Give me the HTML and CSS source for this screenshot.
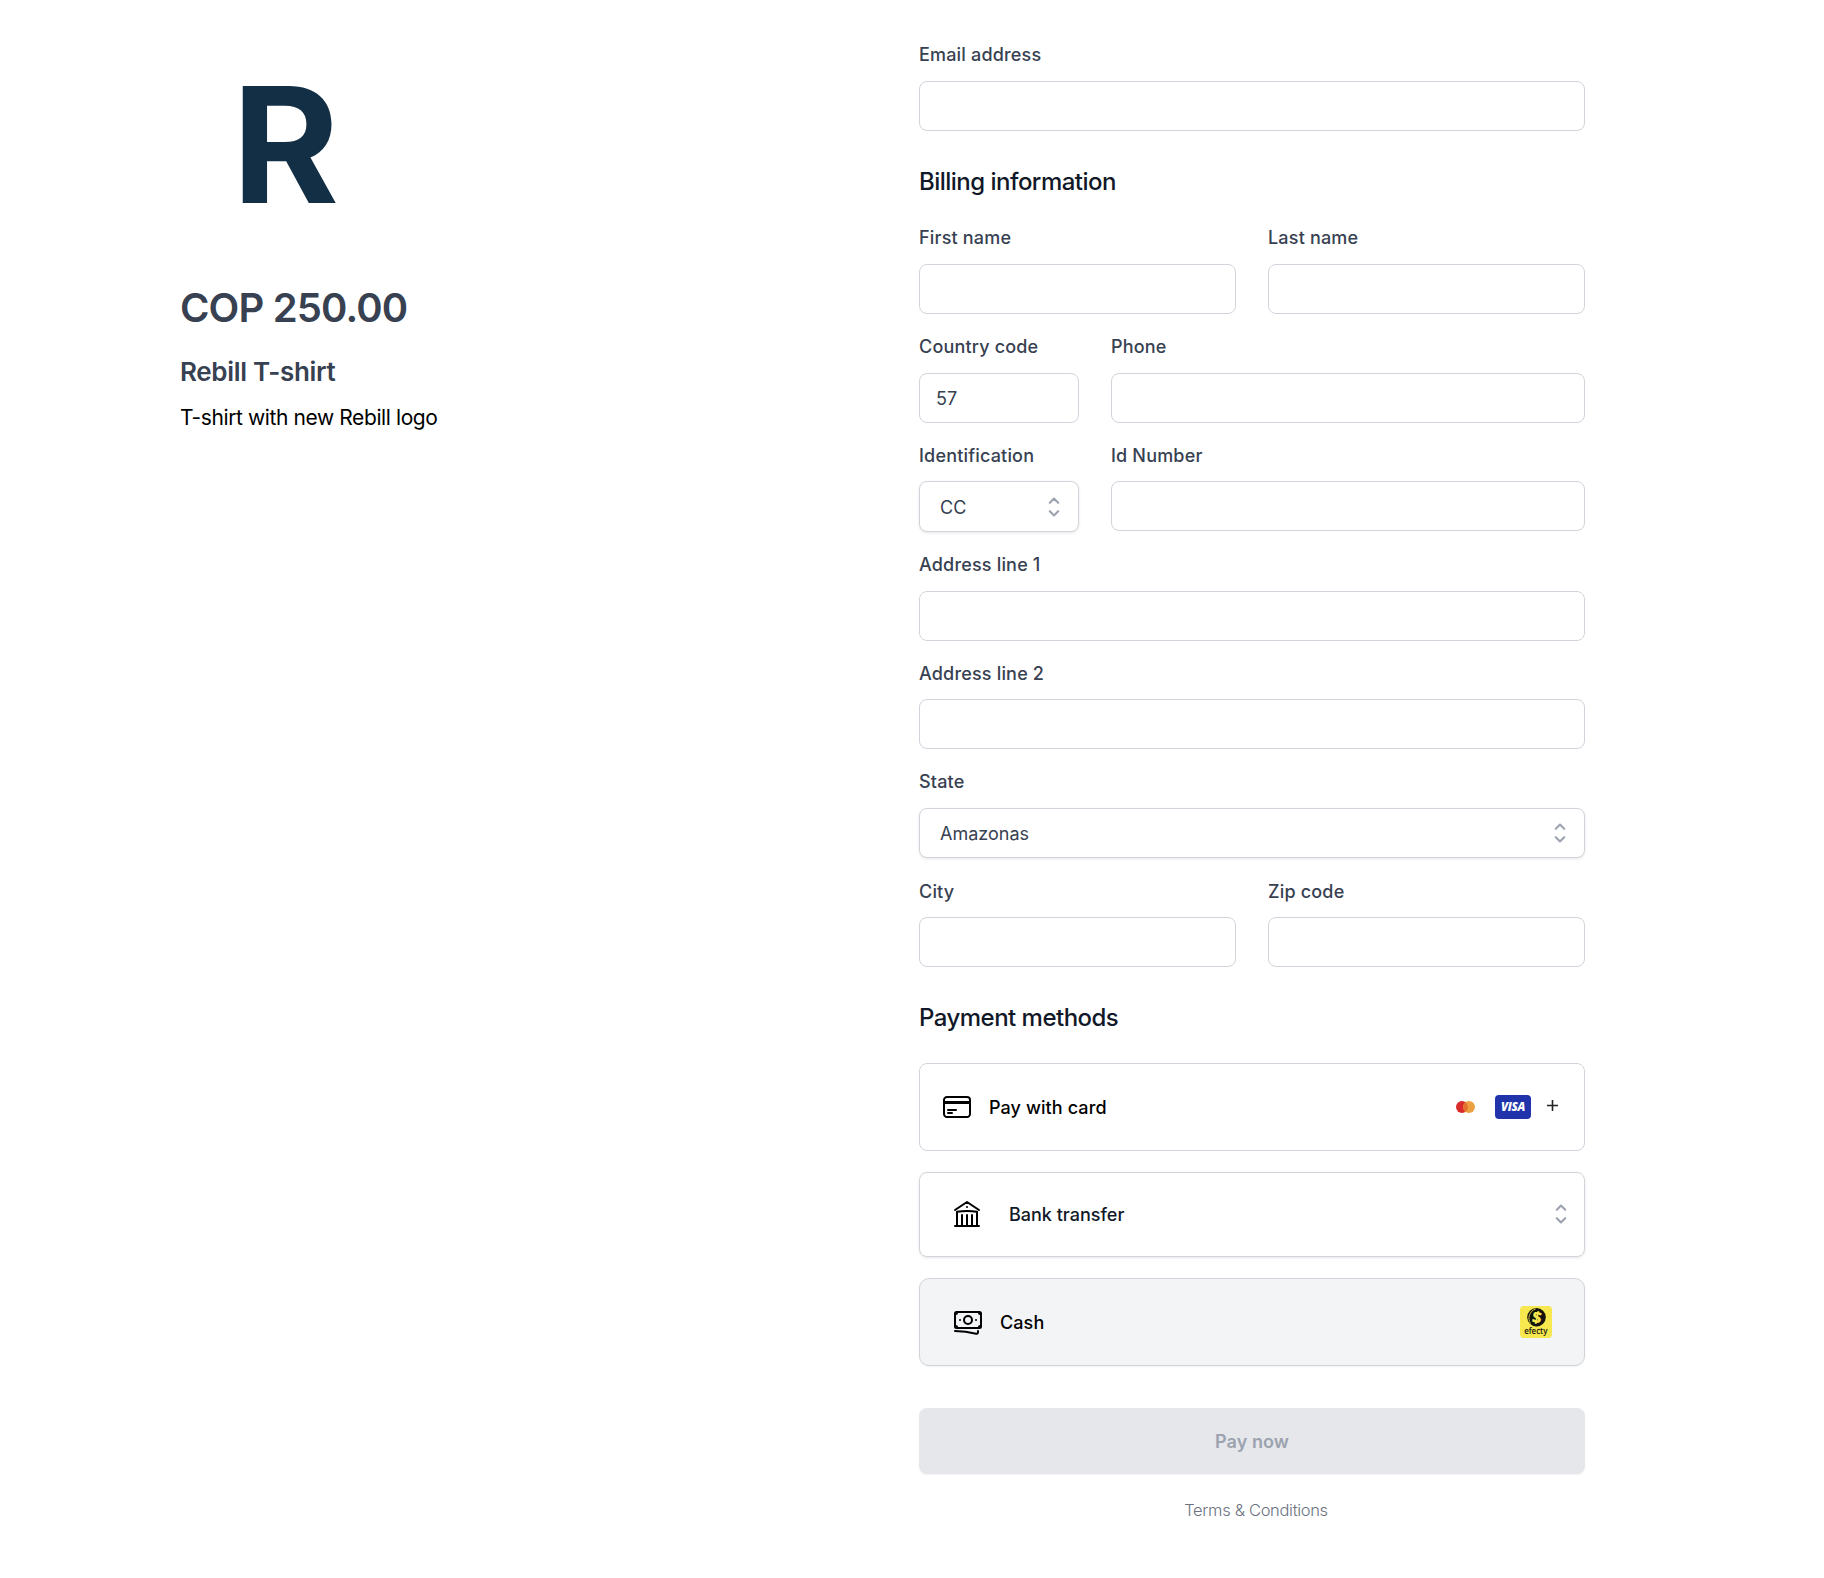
FILE: index.html
```html
<!DOCTYPE html>
<html lang="en">
<head>
<meta charset="utf-8">
<title>Checkout</title>
<link rel="stylesheet" href="styles.css">
</head>
<body>
<main class="checkout">
  <section class="summary">
    <div class="logo">R</div>
    <h1 class="price">COP 250.00</h1>
    <h2 class="product">Rebill T-shirt</h2>
    <p class="description">T-shirt with new Rebill logo</p>
  </section>

  <form class="form">
    <label class="field"><span class="label">Email address</span><input class="input" type="text"></label>

    <h3 class="heading billing-heading">Billing information</h3>
    <div class="rows">
      <div class="row halves">
        <label class="field"><span class="label">First name</span><input class="input" type="text"></label>
        <label class="field"><span class="label">Last name</span><input class="input" type="text"></label>
      </div>
      <div class="row narrow">
        <label class="field"><span class="label">Country code</span><input class="input" type="text" value="57"></label>
        <label class="field"><span class="label">Phone</span><input class="input" type="text"></label>
      </div>
      <div class="row narrow">
        <div class="field">
          <span class="label">Identification</span>
          <div class="select">
            <span>CC</span>
            <svg class="chevrons" viewBox="0 0 20 20"><path d="M7 7l3-3 3 3m0 6l-3 3-3-3"/></svg>
          </div>
        </div>
        <label class="field"><span class="label">Id Number</span><input class="input" type="text"></label>
      </div>
      <label class="field"><span class="label">Address line 1</span><input class="input" type="text"></label>
      <label class="field"><span class="label">Address line 2</span><input class="input" type="text"></label>
      <div class="field">
        <span class="label">State</span>
        <div class="select">
          <span>Amazonas</span>
          <svg class="chevrons" viewBox="0 0 20 20"><path d="M7 7l3-3 3 3m0 6l-3 3-3-3"/></svg>
        </div>
      </div>
      <div class="row halves">
        <label class="field"><span class="label">City</span><input class="input" type="text"></label>
        <label class="field"><span class="label">Zip code</span><input class="input" type="text"></label>
      </div>
    </div>

    <h3 class="heading payment-heading">Payment methods</h3>
    <div class="methods">
      <div class="method card">
        <svg class="icon" viewBox="0 0 24 24"><path d="M2.25 8.25h19.5M2.25 9h19.5m-16.5 5.25h6m-6 2.25h3m-3.75 3h15a2.25 2.25 0 002.25-2.25V6.75A2.25 2.25 0 0019.5 4.5h-15a2.25 2.25 0 00-2.25 2.25v10.5A2.25 2.25 0 004.5 19.5z"/></svg>
        <span class="method-name">Pay with card</span>
        <div class="brands">
          <svg class="mastercard" viewBox="0 0 19 12">
            <circle cx="6" cy="6" r="6" fill="#d92b2b"/>
            <circle cx="13" cy="6" r="6" fill="#eca042"/>
            <path d="M9.5 1.13a6 6 0 010 9.74 6 6 0 010-9.74z" fill="#e5702f"/>
          </svg>
          <span class="visa">VISA</span>
          <svg class="plus" viewBox="0 0 11 11"><path d="M5.5 0v11M0 5.5h11"/></svg>
        </div>
      </div>
      <div class="method bank">
        <svg class="icon" viewBox="0 0 24 24"><path d="M12 21v-8.25M15.75 21v-8.25M8.25 21v-8.25M3 9l9-6 9 6m-1.5 12V10.332A48.36 48.36 0 0012 9.75c-2.551 0-5.056.2-7.5.582V21M3 21h18M12 6.75h.008v.008H12V6.75z"/></svg>
        <span class="method-name">Bank transfer</span>
        <svg class="chevrons" viewBox="0 0 20 20"><path d="M7 7l3-3 3 3m0 6l-3 3-3-3"/></svg>
      </div>
      <div class="method cash">
        <svg class="icon" viewBox="0 0 24 24"><path d="M2.25 18.75a60.07 60.07 0 0115.797 2.101c.727.198 1.453-.342 1.453-1.096V18.75M3.75 4.5v.75A.75.75 0 013 6h-.75m0 0v-.375c0-.621.504-1.125 1.125-1.125H20.25M2.25 6v9m18-10.5v.75c0 .414.336.75.75.75h.75m-1.5-1.5h.375c.621 0 1.125.504 1.125 1.125v9.75c0 .621-.504 1.125-1.125 1.125h-.375m1.5-1.5H21a.75.75 0 00-.75.75v.75m0 0H3.75m0 0h-.375a1.125 1.125 0 01-1.125-1.125V15m1.5 1.5v-.75A.75.75 0 003 15h-.75M15 10.5a3 3 0 11-6 0 3 3 0 016 0zm3 0h.008v.008H18V10.5zm-12 0h.008v.008H6V10.5z"/></svg>
        <span class="method-name">Cash</span>
        <svg class="efecty" viewBox="0 0 32 32">
          <rect width="32" height="32" rx="4" fill="#f6e84e"/>
          <ellipse cx="16.5" cy="11.2" rx="9.3" ry="9.2" fill="#14140c"/>
          <path d="M10.500 17.500C7 12.500 9.500 5 15.500 3" fill="none" stroke="#f6e84e" stroke-width=".8"/>
          <text class="efecty-sign" x="16.900" y="17" transform="rotate(12 16.900 11.300)">$</text>
          <text class="efecty-name" x="15.800" y="27.700" textLength="23.300" lengthAdjust="spacingAndGlyphs">efecty</text>
        </svg>
      </div>
    </div>

    <button class="pay" type="button" disabled>Pay now</button>
    <a class="terms">Terms &amp; Conditions</a>
  </form>
</main>
</body>
</html>
```
FILE: styles.css
```css
* { box-sizing: border-box; margin: 0; }

body {
  font-family: Inter, sans-serif;
  font-size: 18px;
  color: #374151;
  background: #fff;
}

.checkout {
  display: grid;
  grid-template-columns: 666px 666px;
  column-gap: 73px;
  padding: 43px 0 0 180px;
}

/* Product summary */
.logo {
  width: max-content;
  margin: 2px 0 0 52px;
  font-size: 160.5px;
  line-height: 200px;
  font-weight: 700;
  color: #132f45;
  transform: scaleX(1.017);
  transform-origin: left;
}
.price { margin-top: 38.5px; font-size: 40px; line-height: 48px; font-weight: 600; letter-spacing: -.85px; }
.product { margin-top: 24px; font-size: 26px; line-height: 32px; font-weight: 600; letter-spacing: -.33px; }
.description { margin-top: 16.5px; font-size: 21px; line-height: 28px; letter-spacing: -.4px; color: #000; }

/* Form */
.form { display: flex; flex-direction: column; }
.field { display: flex; flex-direction: column; gap: 13.6px; min-width: 0; }
.label { font-weight: 500; line-height: 24px; letter-spacing: .18px; }
.input,
.select {
  width: 100%;
  border: 1px solid #d1d5db;
  border-radius: 8px;
  background: #fff;
  font: inherit;
  color: #374151;
}
.input { height: 50px; padding: 1px 16px 0; }
.select {
  height: 50.67px;
  display: flex;
  align-items: center;
  justify-content: space-between;
  padding: 0 10px 0 20px;
  box-shadow: 0 1px 3px rgba(0, 0, 0, .1);
}
.select span { padding-top: 1.5px; }
.chevrons {
  width: 28px;
  height: 28px;
  fill: none;
  stroke: #9ca3af;
  stroke-width: 1.5;
  stroke-linecap: round;
  stroke-linejoin: round;
}

.heading { font-size: 24px; line-height: 32px; font-weight: 500; letter-spacing: -.52px; color: #111827; }
.billing-heading { margin: 35.6px 0 28.1px; }
.payment-heading { margin: 34.4px 0 29.4px; }

.rows { display: flex; flex-direction: column; gap: 21.07px; }
.row { display: grid; column-gap: 32px; align-items: start; }
.halves { grid-template-columns: 1fr 1fr; }
.narrow { grid-template-columns: 160px 1fr; }

/* Payment methods */
.methods { display: flex; flex-direction: column; gap: 21px; }
.method {
  display: flex;
  align-items: center;
  height: 88px;
  border: 1px solid #d1d5db;
  border-radius: 8px;
  color: #000;
}
.method-name { padding-top: 1px; font-weight: 500; letter-spacing: .1px; }
.icon {
  width: 32px;
  height: 32px;
  fill: none;
  stroke: #000;
  stroke-width: 1.5;
  stroke-linecap: round;
  stroke-linejoin: round;
}
.card { padding: 0 26px 0 21px; }
.card .icon { margin-right: 16px; }
.bank {
  height: 85px;
  padding: 0 9px 0 31px;
  color: #111827;
  box-shadow: 0 1px 3px rgba(0, 0, 0, .1);
}
.bank .icon { margin-right: 26px; }
.bank .method-name { padding-top: 0; letter-spacing: 0; }
.bank .chevrons { margin-left: auto; }
.cash {
  padding: 0 32px;
  border-radius: 10px;
  background: #f3f4f6;
  box-shadow: 0 1px 2px rgba(0, 0, 0, .05);
}
.cash .icon { margin-right: 16px; }

.brands { display: flex; align-items: center; margin-left: auto; }
.mastercard { width: 19px; height: 12px; }
.visa {
  width: 36px;
  height: 24px;
  margin: 0 16px 0 20px;
  border-radius: 4px;
  background: #2033ab;
  color: #fff;
  font: italic 800 11.5px/24px "Open Sans", sans-serif;
  letter-spacing: -.3px;
  text-align: center;
}
.plus { width: 11px; height: 11px; margin-bottom: 3px; stroke: #222; stroke-width: 1.6; }
.efecty { width: 32px; height: 32px; margin-left: auto; }
.efecty-sign { font: 800 16px "Open Sans", sans-serif; fill: #f6e84e; text-anchor: middle; }
.efecty-name { font: 600 8.6px "Open Sans", sans-serif; fill: #14140c; text-anchor: middle; }

.pay {
  height: 66px;
  margin-top: 42px;
  padding-top: 2px;
  border: 0;
  border-radius: 8px;
  background: #e5e7eb;
  box-shadow: 0 1px 2px rgba(0, 0, 0, .05);
  font: 600 18px Inter, sans-serif;
  letter-spacing: .1px;
  color: #9ca3af;
}
.terms {
  margin-top: 24.5px;
  padding-left: 8px;
  font-size: 16.5px;
  line-height: 24px;
  font-weight: 300;
  letter-spacing: -.32px;
  text-align: center;
  color: #6b7280;
}
```
